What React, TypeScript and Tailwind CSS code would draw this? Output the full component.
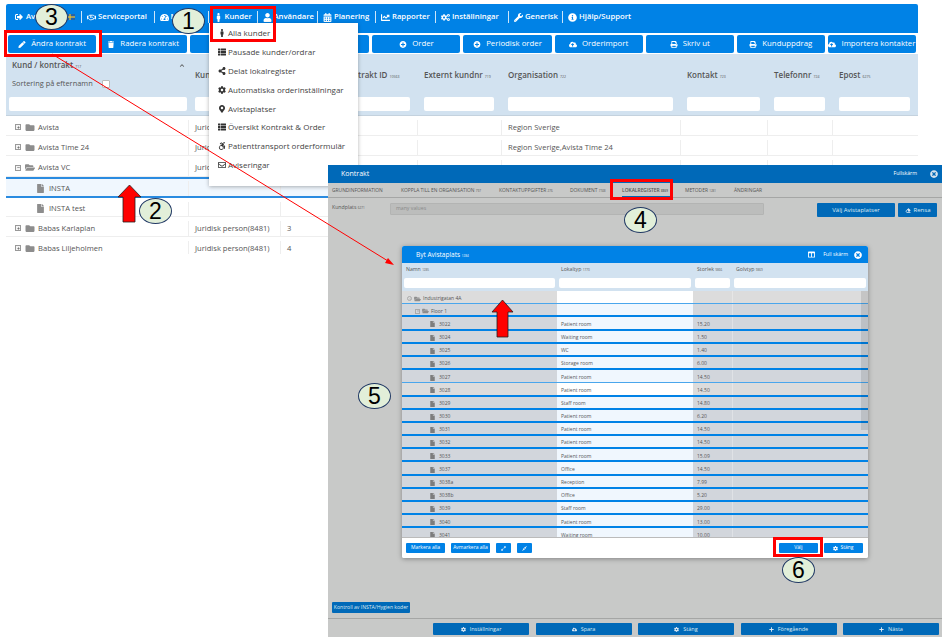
import React from "react";
import {
  FaSignOutAlt, FaRegHandshake, FaTachometerAlt, FaMale, FaUser, FaCalendarAlt, FaChartLine, FaCogs, FaWrench, FaInfoCircle,
  FaPen, FaTrash, FaPlusCircle, FaCloudUploadAlt, FaPrint, FaThList, FaShareAlt, FaCog, FaMapMarkerAlt, FaAccessibleIcon,
  FaRegEnvelope, FaFolder, FaFolderOpen, FaFile, FaChevronUp, FaEraser, FaColumns, FaTimesCircle, FaExpandAlt, FaCompressAlt,
  FaPlus, FaMinus,
} from "react-icons/fa";

const navItems = [
  { icon: FaRegHandshake, label: "Serviceportal", w: "w-[72.5px]" },
  { icon: FaTachometerAlt, label: "Mina", w: "w-[54px]" },
  { icon: FaMale, label: "Kunder", w: "w-[49px]" },
  { icon: FaUser, label: "Användare", w: "w-[60.5px]" },
  { icon: FaCalendarAlt, label: "Planering", w: "w-[58px]" },
  { icon: FaChartLine, label: "Rapporter", w: "w-[60px]" },
  { icon: FaCogs, label: "Inställningar", w: "w-[73px]" },
  { icon: FaWrench, label: "Generisk", w: "w-[54px]" },
  { icon: FaInfoCircle, label: "Hjälp/Support", w: "w-[80px]" },
];

const toolButtons = [
  { icon: FaPen, label: "Ändra kontrakt" },
  { icon: FaTrash, label: "Radera kontrakt" },
  { icon: FaPlusCircle, label: "Ny kund" },
  { icon: FaPlusCircle, label: "Kontrakt" },
  { icon: FaPlusCircle, label: "Order" },
  { icon: FaPlusCircle, label: "Periodisk order" },
  { icon: FaCloudUploadAlt, label: "Orderimport" },
  { icon: FaPrint, label: "Skriv ut" },
  { icon: FaPrint, label: "Kunduppdrag" },
  { icon: FaCloudUploadAlt, label: "Importera kontakter" },
];

const menuItems = [
  { icon: FaMale, label: "Alla kunder" },
  { icon: FaThList, label: "Pausade kunder/ordrar" },
  { icon: FaShareAlt, label: "Delat lokalregister" },
  { icon: FaCog, label: "Automatiska orderinställningar" },
  { icon: FaMapMarkerAlt, label: "Avistaplatser" },
  { icon: FaThList, label: "Översikt Kontrakt & Order" },
  { icon: FaAccessibleIcon, label: "Patienttransport orderformulär" },
  { icon: FaRegEnvelope, label: "Aviseringar" },
];

const backCols = "grid grid-cols-[183px_92px_56px_81px_84px_179px_87px_65px_85px]";

const backHeaders = [
  { label: "Kund", no: "718" },
  { label: "", no: "" },
  { label: "Kontrakt ID", no: "10563" },
  { label: "Externt kundnr", no: "719" },
  { label: "Organisation", no: "722" },
  { label: "Kontakt", no: "723" },
  { label: "Telefonnr", no: "724" },
  { label: "Epost", no: "6275" },
];

const backRows = [
  { name: "Avista", kind: "closed", type: "Juridisk person(8481)", id: "", org: "Region Sverige", h: "h-[20px]" },
  { name: "Avista Time 24", kind: "closed", type: "Juridisk person(8481)", id: "", org: "Region Sverige,Avista Time 24", h: "h-[20px]" },
  { name: "Avista VC", kind: "open", type: "Juridisk person(8481)", id: "", org: "Region Sverige,Avista VC", h: "h-[21px]" },
  { name: "INSTA", kind: "selected", type: "", id: "", org: "", h: "h-[21px]" },
  { name: "INSTA test", kind: "file", type: "", id: "", org: "", h: "h-[19px]" },
  { name: "Babas Karlaplan", kind: "closed", type: "Juridisk person(8481)", id: "3", org: "", h: "h-[20px]" },
  { name: "Babas Liljeholmen", kind: "closed", type: "Juridisk person(8481)", id: "4", org: "", h: "h-[20px]" },
];

const tabs = [
  { label: "GRUNDINFORMATION", no: "", w: "w-[69px]" },
  { label: "KOPPLA TILL EN ORGANISATION", no: "797", w: "w-[98px]" },
  { label: "KONTAKTUPPGIFTER", no: "276", w: "w-[71px]" },
  { label: "DOKUMENT", no: "7748", w: "w-[52px]" },
  { label: "LOKALREGISTER", no: "8869", w: "w-[63px]" },
  { label: "METODER", no: "1281", w: "w-[49px]" },
  { label: "ÄNDRINGAR", no: "", w: "w-[50px]" },
];

const roomRows = [
  ["3022", "Patient room", "15.20"],
  ["3024", "Waiting room", "1.50"],
  ["3025", "WC", "1.40"],
  ["3026", "Storage room", "6.00"],
  ["3027", "Patient room", "14.50"],
  ["3028", "Patient room", "14.50"],
  ["3029", "Staff room", "14.80"],
  ["3030", "Patient room", "6.20"],
  ["3031", "Patient room", "14.50"],
  ["3032", "Patient room", "14.50"],
  ["3033", "Patient room", "15.09"],
  ["3037", "Office", "14.50"],
  ["3038a", "Reception", "7.99"],
  ["3038b", "Office", "5.20"],
  ["3039", "Staff room", "29.00"],
  ["3040", "Patient room", "13.00"],
  ["3041", "Waiting room", "10.00"],
];

const footerButtons = [
  { icon: FaCog, label: "Inställningar" },
  { icon: FaCloudUploadAlt, label: "Spara" },
  { icon: FaCog, label: "Stäng" },
  { icon: FaPlus, label: "Föregående" },
  { icon: FaPlus, label: "Nästa" },
];

const badges = [
  { text: "3", pos: "left-[35px] top-[4px]" },
  { text: "1", pos: "left-[172px] top-[8px]" },
  { text: "2", pos: "left-[139px] top-[198px]" },
  { text: "4", pos: "left-[624px] top-[207px]" },
  { text: "5", pos: "left-[358px] top-[383px]" },
  { text: "6", pos: "left-[782px] top-[557px]" },
];

const redBoxes = [
  "left-[4px] top-[30px] w-[98px] h-[27px]",
  "left-[210px] top-[6px] w-[66px] h-[36px]",
  "left-[610px] top-[179px] w-[63px] h-[21px]",
  "left-[773px] top-[537px] w-[50px] h-[20px]",
];

const TreeBox = ({ minus }: { minus?: boolean }) => (
  <span className="flex h-[6px] w-[6px] items-center justify-center border border-[#999] bg-[#f4f4f4] text-[#555]">
    {minus ? <FaMinus className="h-[3px] w-[3px]" /> : <FaPlus className="h-[3px] w-[3px]" />}
  </span>
);

const BackName = ({ name, kind }: { name: string; kind: string }) => {
  if (kind === "file" || kind === "selected") {
    return (
      <div className="flex items-center pl-[31px]">
        <FaFile className="h-[9px] w-[7px] text-[#8d8d8d]" />
        <span className="ml-[5px]">{name}</span>
      </div>
    );
  }
  return (
    <div className="flex items-center pl-[9px]">
      <TreeBox minus={kind === "open"} />
      {kind === "open" ? <FaFolderOpen className="ml-[4px] h-[9px] w-[10px] text-[#8d8d8d]" /> : <FaFolder className="ml-[4px] h-[9px] w-[10px] text-[#8d8d8d]" />}
      <span className="ml-[3px]">{name}</span>
    </div>
  );
};

const BackWindow = () => (
  <div className="ml-[6px] h-[250px] w-[912px] overflow-hidden text-[#555]">
    <nav className="flex h-[29px] items-center rounded-t-[2px] bg-[#0082e6] pb-[3px] pl-[9px] text-[7.7px] font-semibold text-white">
      <div className="flex w-[66px] items-center">
        <FaSignOutAlt className="h-[8px] w-[8px]" />
        <span className="ml-[3px]">Avsluta</span>
        <svg viewBox="0 0 8 6" className="ml-auto mr-[6px] h-[6px] w-[8px]">
          <rect width="8" height="6" fill="#2563a8" />
          <rect x="2.4" width="1.2" height="6" fill="#f4c430" />
          <rect y="2.4" width="8" height="1.2" fill="#f4c430" />
        </svg>
      </div>
      {navItems.map(({ icon: Icon, label, w }) => (
        <div key={label} className={`${w} flex h-[12px] shrink-0 items-center border-l border-white/80 pl-[5px]`}>
          <Icon className="h-[9px] w-[9px] shrink-0" />
          <span className="ml-[2px] whitespace-nowrap">{label}</span>
        </div>
      ))}
    </nav>
    <div className="flex h-[21px] items-center gap-[3px] bg-white px-[2px] pt-[1px]">
      {toolButtons.map(({ icon: Icon, label }) => (
        <button key={label} className="flex h-[18px] min-w-0 flex-1 items-center justify-center overflow-hidden whitespace-nowrap rounded-[2px] bg-[#0082e6] text-[7.8px] text-white">
          <Icon className="mr-[5px] h-[7px] w-[8px] shrink-0" />
          {label}
        </button>
      ))}
    </div>
    <div className={`${backCols} h-[62px] border-b border-[#c4d2de] bg-[#d2e2f0] text-[8px] font-semibold`}>
      <div className="flex flex-col pl-[3px] pr-[2px]">
        <div className="mt-[5px] flex items-center justify-between pl-[3px] pr-[2px]">
          <span>
            Kund / kontrakt <span className="text-[3.5px] font-normal">717</span>
          </span>
          <FaChevronUp className="h-[5px] w-[6px]" />
        </div>
        <div className="mt-[7px] flex items-center pl-[3px] text-[7.4px] font-normal">
          Sortering på efternamn
          <span className="ml-[9px] h-[8px] w-[8px] rounded-[1px] border border-[#bbb] bg-white" />
        </div>
        <div className="mt-auto mb-[4px] h-[14px] rounded-[2px] bg-white" />
      </div>
      {backHeaders.map((col, i) => (
        <div key={i} className="flex flex-col pl-[6px] pr-[8px]">
          <div className="mt-[15px] h-[12px] whitespace-nowrap">
            {col.label} <span className="text-[3.5px] font-normal">{col.no}</span>
          </div>
          <div className="mt-auto mb-[4px] h-[14px] rounded-[2px] bg-white" />
        </div>
      ))}
    </div>
    {backRows.map((row) => (
      <div
        key={row.name}
        className={`${backCols} ${row.h} items-stretch text-[7.6px] ${row.kind === "selected" ? "border-y-2 border-[#2a8be0] bg-[#f0f7fe] pt-[2px]" : "border-b border-[#eeeeee] bg-white pt-[4px]"}`}
      >
        <div className="flex items-center border-r border-[#eeeeee]">
          <BackName name={row.name} kind={row.kind} />
        </div>
        <div className="flex items-center overflow-hidden whitespace-nowrap border-r border-[#eeeeee] pl-[6px]">{row.type}</div>
        <div className="flex items-center pl-[6px]">{row.id}</div>
        <div className="border-r border-[#eeeeee]" />
        <div className="border-r border-[#eeeeee]" />
        <div className="flex items-center border-r border-[#eeeeee] pl-[6px]">{row.org}</div>
        <div className="border-r border-[#eeeeee]" />
        <div className="border-r border-[#eeeeee]" />
        <div />
      </div>
    ))}
  </div>
);

const KundMenu = () => (
  <div className="absolute left-[209px] top-[23px] h-[163px] w-[149px] bg-white pt-[1px] text-[8px] text-[#444] shadow-[0_1px_4px_rgba(0,0,0,0.3)]">
    {menuItems.map(({ icon: Icon, label }) => (
      <div key={label} className="flex h-[18.8px] items-center pl-[7px]">
        <span className="flex w-[11px] justify-center">
          <Icon className="h-[8px] w-[8px] text-[#333]" />
        </span>
        <span className="ml-[1px] whitespace-nowrap">{label}</span>
      </div>
    ))}
  </div>
);

const dialogCols = "grid grid-cols-[155px_136px_39px_136px]";

const RoomRow = ({ indent, name, type, size, light, thin }: { indent: "top" | "floor" | "room"; name: string; type?: string; size?: string; light?: boolean; thin?: boolean }) => (
  <div className={`${dialogCols} h-[13.2px] shrink-0 overflow-hidden text-[5px] text-[#555] ${thin ? "border-b border-[#4aa6ec]" : "border-b-2 border-[#0082e6]"} ${light ? "bg-[#dcdcdc]" : "bg-[#d2d6dc]"}`}>
    <div className="flex items-center pt-[3px]">
      {indent === "top" && (
        <div className="flex items-center pl-[5px]">
          <span className="flex h-[5px] w-[5px] items-center justify-center rounded-full border border-[#aaa] text-[#999]"><FaMinus className="h-[2px] w-[2px]" /></span>
          <FaFolderOpen className="ml-[2px] h-[6px] w-[7px] text-[#8d8d8d]" />
          <span className="ml-[2px]">{name}</span>
        </div>
      )}
      {indent === "floor" && (
        <div className="flex items-center pl-[13px]">
          <span className="flex h-[5px] w-[5px] items-center justify-center border border-[#aaa] text-[#777]"><FaMinus className="h-[2px] w-[2px]" /></span>
          <FaFolderOpen className="ml-[2px] h-[6px] w-[7px] text-[#8d8d8d]" />
          <span className="ml-[2px]">{name}</span>
        </div>
      )}
      {indent === "room" && (
        <div className="flex items-center pl-[28px]">
          <FaFile className="h-[6px] w-[5px] text-[#7d7d7d]" />
          <span className="ml-[4px]">{name}</span>
        </div>
      )}
    </div>
    <div className={`flex items-center pl-[4px] pt-[3px] ${light ? "bg-white" : "bg-[#f0f7fe]"}`}>{type}</div>
    <div className="flex items-center pl-[4px] pt-[3px]">{size}</div>
    <div className="border-l border-white/30" />
  </div>
);

const AvistaDialog = () => (
  <div className="absolute left-[74px] top-[48px] flex h-[312px] w-[466px] flex-col overflow-hidden rounded-[2px] bg-white shadow-[0_1px_5px_rgba(0,0,0,0.35)]">
    <div className="flex h-[17px] shrink-0 items-center bg-[#0082e6] pl-[14px] pr-[6px] text-white">
      <span className="text-[6.5px] font-medium">Byt Avistaplats <span className="text-[3px] font-normal">1284</span></span>
      <FaColumns className="ml-auto h-[7px] w-[7px]" />
      <span className="ml-[8px] text-[5.2px]">Full skärm</span>
      <FaTimesCircle className="ml-[6px] h-[8px] w-[8px]" />
    </div>
    <div className={`${dialogCols} h-[28px] shrink-0 bg-[#d2e2f0] text-[5.2px] text-[#555]`}>
      {[["Namn", "1285"], ["Lokaltyp", "1770"], ["Storlek", "9866"], ["Golvtyp", "9869"]].map(([label, no]) => (
        <div key={label} className="flex flex-col px-[2px]">
          <div className="mt-[3px] h-[8px] whitespace-nowrap pl-[2px]">{label} <span className="text-[3px]">{no}</span></div>
          <div className="mt-[4px] h-[10px] rounded-[2px] bg-white" />
        </div>
      ))}
    </div>
    <div className="relative min-h-0 flex-1 overflow-hidden">
      <RoomRow indent="top" name="Industrigatan 4A" light thin />
      <RoomRow indent="floor" name="Floor 1" />
      {roomRows.map(([name, type, size]) => (
        <RoomRow key={name} indent="room" name={name} type={type} size={size} light={name === "3028"} thin={name === "3027"} />
      ))}
      <div className="absolute right-0 top-0 h-[139px] w-[7px] bg-black/10" />
    </div>
    <div className="flex h-[21px] shrink-0 items-center gap-[6px] border-t border-[#bbb] bg-white pl-[4px] pr-[5px] text-[5px] text-white">
      <button className="h-[10px] w-[39px] rounded-[1px] bg-[#0082e6]">Markera alla</button>
      <button className="h-[10px] w-[39px] whitespace-nowrap rounded-[1px] bg-[#0082e6]">Avmarkera alla</button>
      <button className="flex h-[10px] w-[15px] items-center justify-center rounded-[1px] bg-[#0082e6]"><FaExpandAlt className="h-[5px] w-[5px]" /></button>
      <button className="flex h-[10px] w-[15px] items-center justify-center rounded-[1px] bg-[#0082e6]"><FaCompressAlt className="h-[5px] w-[5px]" /></button>
      <button className="ml-auto h-[10px] w-[39px] rounded-[1px] bg-[#0082e6]">Välj</button>
      <button className="flex h-[10px] w-[39px] items-center justify-center rounded-[1px] bg-[#0082e6]"><FaCog className="mr-[2px] h-[5px] w-[5px]" />Stäng</button>
    </div>
  </div>
);

const KontraktWindow = () => (
  <div className="absolute left-[328px] top-[165px] flex h-[472px] w-[614px] flex-col bg-[#c8c9c8]">
    <div className="flex h-[18px] shrink-0 items-center bg-[#0069b8] pl-[13px] pr-[4px] text-white">
      <span className="text-[7px]">Kontrakt</span>
      <span className="ml-auto text-[5.2px]">Fullskärm</span>
      <FaTimesCircle className="ml-[13px] h-[8px] w-[8px] text-[#d7e4ee]" />
    </div>
    <div className="flex h-[15px] shrink-0 items-center border-b border-[#a5a6a5] pl-[4px] text-[4.9px] text-[#555]">
      {tabs.map((t) => (
        <div key={t.label} className={`${t.w} relative flex h-full shrink-0 items-center whitespace-nowrap pt-[2px] ${t.label === "LOKALREGISTER" ? "font-semibold" : ""}`}>
          <span>{t.label} <span className="text-[3px]">{t.no}</span></span>
          {t.label === "LOKALREGISTER" && <span className="absolute bottom-0 left-0 h-px w-[48px] bg-[#0069b8]" />}
        </div>
      ))}
    </div>
    <div className="relative min-h-0 flex-1">
      <div className="flex items-start pl-[4px] pr-[4px] pt-[5px]">
        <span className="w-[58px] pt-[1px] text-[5.2px] text-[#555]">Kundplats <span className="text-[3px]">6271</span></span>
        <div className="flex h-[12px] w-[374px] items-center rounded-[1px] border border-[#b3b4b3] bg-[#bcbdbc] pl-[5px] text-[5.2px] text-[#8a8a8a]">many values</div>
        <button className="ml-[53px] h-[14px] w-[78px] rounded-[1px] bg-[#0069b8] text-[6px] text-[#dfe9f2]">Välj Avistaplatser</button>
        <button className="ml-[3px] flex h-[14px] w-[39px] items-center justify-center rounded-[1px] bg-[#0069b8] text-[6px] text-[#dfe9f2]"><FaEraser className="mr-[3px] h-[5px] w-[6px]" />Rensa</button>
      </div>
      <AvistaDialog />
      <button className="absolute bottom-[5px] left-[4px] h-[11px] w-[78px] overflow-hidden whitespace-nowrap rounded-[1px] bg-[#0069b8] text-[5.1px] text-[#dfe9f2]">Kontroll av INSTA/Hygien koder</button>
    </div>
    <div className="flex h-[19px] shrink-0 items-center justify-end gap-[6.5px] border-t border-[#a5a6a5] pr-[3px] pt-[2px]">
      {footerButtons.map(({ icon: Icon, label }) => (
        <button key={label} className="flex h-[12px] w-[96px] items-center justify-center rounded-[1px] bg-[#0069b8] text-[5.5px] text-[#dfe9f2]">
          <Icon className="mr-[4px] h-[5px] w-[5px]" />
          {label}
        </button>
      ))}
    </div>
  </div>
);

const Annotations = () => (
  <>
    {redBoxes.map((pos) => (
      <div key={pos} className={`absolute ${pos} border-[3px] border-[#ff0000]`} />
    ))}
    <svg className="absolute left-0 top-0 h-[640px] w-[947px]" viewBox="0 0 947 640">
      <line x1="52" y1="54" x2="388" y2="261" stroke="#ff0000" strokeWidth="1" />
      <polygon points="394,265 385,263 388,258" fill="#ff0000" />
      <polygon points="129.5,185 141,197 135,197 135,222 123,222 123,197 118,197" fill="#ff0000" stroke="#222" strokeWidth="0.8" />
      <polygon points="502.5,300 513,312 508,312 508,337 497,337 497,312 492,312" fill="#ff0000" stroke="#222" strokeWidth="0.8" />
    </svg>
    {badges.map((b) => (
      <div key={b.text} className={`absolute ${b.pos} flex h-[26px] w-[33px] items-center justify-center rounded-[50%] border border-[#203864] bg-[#e2efd9] font-['Liberation_Sans',sans-serif] text-[23px] leading-none text-black`}>
        {b.text}
      </div>
    ))}
  </>
);

export default function App() {
  return (
    <div className="relative h-[640px] w-[947px] overflow-hidden bg-white pt-[4px] font-['Open_Sans',sans-serif]">
      <BackWindow />
      <KundMenu />
      <KontraktWindow />
      <Annotations />
    </div>
  );
}
